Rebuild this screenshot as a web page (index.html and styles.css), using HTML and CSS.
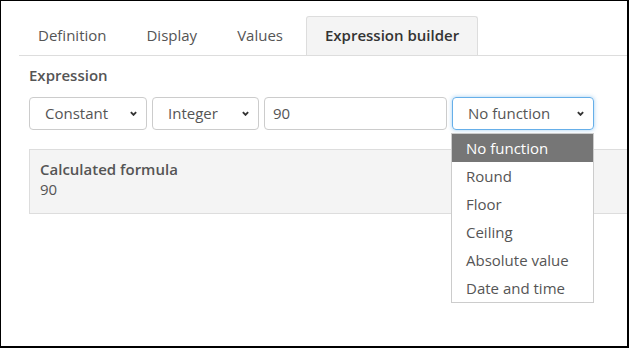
FILE: index.html
```html
<!DOCTYPE html>
<html lang="en-US">
<head>
    <meta charset="UTF-8">
    <meta name="viewport" content="width=device-width">
    <title>Expression builder</title>
    <link rel="stylesheet" href="styles.css">
</head>
<body>

<div class="frame">
  <div class="tabs">
    <div class="tab">Definition</div>
    <div class="tab">Display</div>
    <div class="tab">Values</div>
    <div class="tab active">Expression builder</div>
  </div>

  <div class="pane">
    <div class="label">Expression</div>
    <div class="row">
      <div class="select w-constant">Constant
        <svg class="chev" viewBox="0 0 8 5"><path d="M1 1l3 3 3-3"/></svg>
      </div>
      <div class="select w-integer">Integer
        <svg class="chev" viewBox="0 0 8 5"><path d="M1 1l3 3 3-3"/></svg>
      </div>
      <div class="input">90</div>
      <div class="select w-func focus">No function
        <svg class="chev" viewBox="0 0 8 5"><path d="M1 1l3 3 3-3"/></svg>
        <ul class="menu">
          <li class="on">No function</li>
          <li>Round</li>
          <li>Floor</li>
          <li>Ceiling</li>
          <li>Absolute value</li>
          <li>Date and time</li>
        </ul>
      </div>
    </div>

    <div class="formula">
      <div class="formula-title">Calculated formula</div>
      <div>90</div>
    </div>
  </div>
</div>

</body>
</html>
```

FILE: styles.css
```css
body {
    margin: 0;
    font: 15px "Open Sans", "Liberation Sans", sans-serif;
    color: #555;
}
.frame {
    width: 629px;
    height: 348px;
    box-sizing: border-box;
    border: 1px solid #000;
    border-right-width: 2px;
    border-bottom-width: 2px;
    padding: 15px 0 0 18px;
    overflow: hidden;
    background: #fff;
}
.tabs {
    display: flex;
    border-bottom: 1px solid #ddd;
}
.tab {
    height: 39px;
    line-height: 39px;
    padding: 0 19px;
    margin-right: 2px;
    box-sizing: border-box;
}
.tab.active {
    margin-left: 2px;
    padding: 0 18px;
    background: #f4f4f4;
    border: 1px solid #ddd;
    border-bottom: none;
    border-radius: 3px 3px 0 0;
    line-height: 37px;
    font-weight: 600;
    color: #333;
}
.pane {
    padding: 9px 0 0 10px;
}
.label {
    font-weight: 600;
    line-height: 20px;
    margin-bottom: 12px;
}
.row {
    display: flex;
    gap: 5px;
}
.select, .input {
    position: relative;
    display: flex;
    align-items: center;
    height: 33px;
    box-sizing: border-box;
    border: 1px solid #ccc;
    border-radius: 4px;
    padding: 0 9px 1px 15px;
}
.input {
    width: 183px;
    padding-left: 8px;
}
.w-constant { width: 118px; }
.w-integer { width: 107px; }
.w-func { width: 142px; }
.focus {
    border-color: #66afe9;
    box-shadow: 0 0 4px rgba(102, 175, 233, .6);
}
.chev {
    width: 7px;
    height: 5px;
    margin-left: auto;
    fill: none;
    stroke: #333;
    stroke-width: 2.2;
}
.menu {
    position: absolute;
    top: 35px;
    left: -2px;
    width: 143px;
    box-sizing: border-box;
    margin: 0;
    padding: 0;
    list-style: none;
    background: #fff;
    border: 1px solid #ccc;
    z-index: 2;
}
.menu li {
    height: 28px;
    line-height: 28px;
    padding-left: 14px;
}
.menu li.on {
    background: #767676;
    color: #fff;
}
.formula {
    margin-top: 19px;
    margin-right: -20px;
    background: #f4f4f4;
    border: 1px solid #ddd;
    padding: 9px 10px 14px;
    line-height: 20px;
}
.formula-title {
    font-weight: 600;
}
```
